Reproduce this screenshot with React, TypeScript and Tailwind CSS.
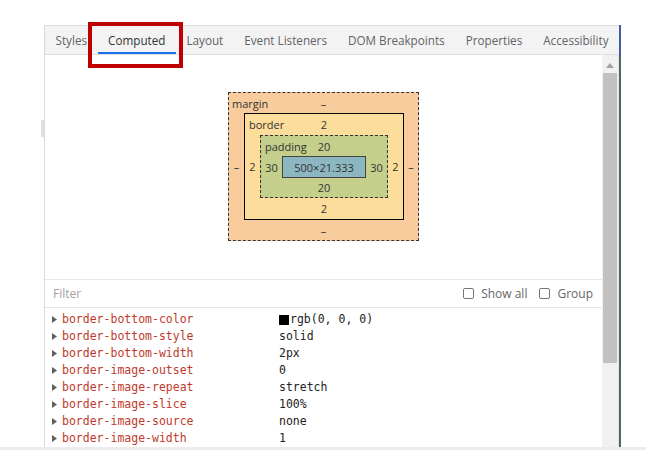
import React from "react";

const tabs = [
  "Styles",
  "Computed",
  "Layout",
  "Event Listeners",
  "DOM Breakpoints",
  "Properties",
  "Accessibility",
];

const rows = [
  { name: "border-bottom-color", value: "rgb(0, 0, 0)", swatch: true },
  { name: "border-bottom-style", value: "solid" },
  { name: "border-bottom-width", value: "2px" },
  { name: "border-image-outset", value: "0" },
  { name: "border-image-repeat", value: "stretch" },
  { name: "border-image-slice", value: "100%" },
  { name: "border-image-source", value: "none" },
  { name: "border-image-width", value: "1" },
];

const sans = "font-['Open_Sans',sans-serif]";
const mono = "font-['DejaVu_Sans_Mono',monospace]";

const BoxModel = () => (
  <div className="flex justify-center pt-[37px] pb-[38px]">
    {/* margin */}
    <div className="flex h-[149px] w-[191px] flex-col border border-dashed border-[#333] bg-[#f9cc9d] text-[11px] leading-none text-[#333]">
      <div className="relative flex h-[20px] items-center justify-center">
        <span className="absolute left-[3px]">margin</span>
        <span>–</span>
      </div>
      <div className="flex items-center">
        <span className="w-[15px] text-center">–</span>
        {/* border */}
        <div className="flex h-[107px] w-[160px] flex-col border border-black bg-[#fddd9b]">
          <div className="relative flex h-[21px] items-center justify-center">
            <span className="absolute left-[4px]">border</span>
            <span>2</span>
          </div>
          <div className="flex items-center">
            <span className="w-[15px] text-center">2</span>
            {/* padding */}
            <div className="flex h-[63px] w-[128px] flex-col border border-dashed border-[#333] bg-[#c3cf8a]">
              <div className="relative flex h-[20px] items-center justify-center">
                <span className="absolute left-[4px]">padding</span>
                <span>20</span>
              </div>
              <div className="flex items-center">
                <span className="w-[21px] text-center">30</span>
                <div className="flex h-[22px] w-[84px] items-center justify-center border border-[#444] bg-[#8cb6c0]">
                  500×21.333
                </div>
                <span className="w-[21px] text-center">30</span>
              </div>
              <div className="flex flex-1 items-center justify-center">20</div>
            </div>
            <span className="w-[15px] text-center">2</span>
          </div>
          <div className="flex flex-1 items-center justify-center">2</div>
        </div>
        <span className="w-[14px] text-center">–</span>
      </div>
      <div className="flex flex-1 items-center justify-center">–</div>
    </div>
  </div>
);

const Checkbox = ({ label }: { label: string }) => (
  <label className="flex items-center gap-[7px]">
    <span className="h-[11px] w-[11px] rounded-[2px] border border-[#767676] bg-white" />
    <span>{label}</span>
  </label>
);

export default function App() {
  return (
    <div className={`relative flex h-[450px] w-[646px] flex-col bg-white ${sans}`}>
      <div className="flex flex-1 pt-[25px]">
        <div className="relative w-[44px]">
          <div className="absolute right-0 top-[95px] h-[17px] w-[3px] bg-[#e0e0e0]" />
        </div>
        <div className="flex w-[575px] flex-col border-l border-[#dadada]">
          {/* tab bar */}
          <div className="flex h-[30px] border-y border-[#e0e0e0] bg-[#f3f3f3] pt-[2px] text-[11.7px] text-[#5f6368]">
            {tabs.map((t) => (
              <div
                key={t}
                className={`relative flex items-center px-[10.5px] whitespace-nowrap ${
                  t === "Computed" ? "text-[#333]" : ""
                }`}
              >
                {t}
                {t === "Computed" && (
                  <span className="absolute bottom-0 left-0 right-0 h-[2px] bg-[#1a73e8]" />
                )}
              </div>
            ))}
          </div>

          <div className="flex flex-1">
            <div className="flex flex-1 flex-col">
              <BoxModel />

              {/* filter */}
              <div className="flex h-[29px] items-center justify-between border-y border-[#e6e6e6] pl-[8px] pr-[9px] text-[12px]">
                <span className="text-[#a0a0a0]">Filter</span>
                <div className="flex items-center gap-[12px] text-[#666]">
                  <Checkbox label="Show all" />
                  <Checkbox label="Group" />
                </div>
              </div>

              {/* properties */}
              <div className={`pt-[3px] text-[11.5px] leading-[17px] ${mono}`}>
                {rows.map((r) => (
                  <div key={r.name} className="grid grid-cols-[227px_1fr] pl-[7px]">
                    <div className="flex items-center gap-[5px]">
                      <svg width="5" height="7" viewBox="0 0 5 7">
                        <path d="M0 0 L5 3.5 L0 7 Z" fill="#606060" />
                      </svg>
                      <span className="text-[#c0392b]">{r.name}</span>
                    </div>
                    <div className="flex items-center text-[#222]">
                      {r.swatch && (
                        <span className="mr-[1px] h-[10px] w-[10px] bg-black" />
                      )}
                      {r.value}
                    </div>
                  </div>
                ))}
              </div>
            </div>

            {/* scrollbar */}
            <div className="flex w-[17px] flex-col items-center border-r border-[#e4e4e4] bg-[#f1f1f1] pt-[8px]">
              <svg width="8" height="5" viewBox="0 0 8 5">
                <path d="M0 5 L4 0 L8 5 Z" fill="#a3a3a3" />
              </svg>
              <div className="mt-[5px] h-[290px] w-[14px] bg-[#c1c1c1]" />
            </div>
          </div>
        </div>
        <div className="flex w-[2px] flex-col bg-[#50646b]">
          <div className="h-[30px] bg-[#3b5ea8]" />
        </div>
      </div>
      <div className="h-[3px] bg-[#ececec]" />

      {/* highlight box */}
      <div className="absolute left-[88px] top-[22px] h-[46px] w-[95px] border-[4px] border-[#c00000]" />
    </div>
  );
}
